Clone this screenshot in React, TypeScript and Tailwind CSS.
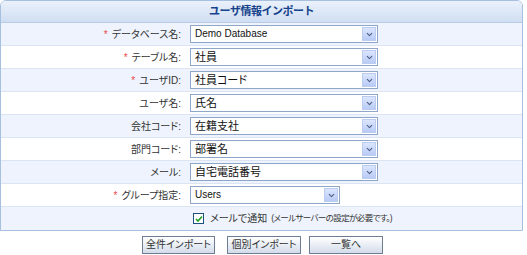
import { ChevronDown } from 'lucide-react';

interface Field {
  label: string;
  value: string;
  required?: boolean;
  short?: boolean;
}

const fields: Field[] = [
  { label: 'データベース名:', value: 'Demo Database', required: true },
  { label: 'テーブル名:', value: '社員', required: true },
  { label: 'ユーザID:', value: '社員コード', required: true },
  { label: 'ユーザ名:', value: '氏名' },
  { label: '会社コード:', value: '在籍支社' },
  { label: '部門コード:', value: '部署名' },
  { label: 'メール:', value: '自宅電話番号' },
  { label: 'グループ指定:', value: 'Users', required: true, short: true },
];

function FakeSelect({ value, short }: { value: string; short?: boolean }) {
  const latin = /^[\x20-\x7e]+$/.test(value);
  return (
    <div
      className={`relative flex h-[18px] items-center border border-[#8ea6c8] bg-white ${
        short ? 'w-[150px]' : 'w-[188px]'
      }`}
    >
      <span className={`pl-[4px] leading-none text-[#111] ${latin ? 'text-[10px]' : 'text-[11px]'}`}>
        {value}
      </span>
      <span className="absolute right-[1px] top-[1px] flex h-[14px] w-[14px] items-center justify-center border border-[#bccbf0] bg-gradient-to-b from-[#dbe5fd] to-[#b9cbf6]">
        <ChevronDown size={9} strokeWidth={3} className="text-[#4d5f86]" />
      </span>
    </div>
  );
}

export default function App() {
  return (
    <div className="h-[255px] w-[527px] bg-white font-['Liberation_Sans','Noto_Sans_CJK_JP',sans-serif] [font-feature-settings:'palt']">
      <div className="w-[523px] overflow-hidden rounded-t-[6px] border border-[#a8c0e0]">
        {/* Header */}
        <div className="flex h-[22px] items-center justify-center border-b border-[#b8cbe6] bg-gradient-to-b from-[#eaf1fb] to-[#d0def2]">
          <h1 className="text-[11px] font-bold tracking-[-0.5px] text-[#15428b] [font-feature-settings:normal]">
            ユーザ情報インポート
          </h1>
        </div>

        {fields.map((f, idx) => (
          <div
            key={f.label}
            className={`flex h-[23px] items-center border-b border-[#dbe4f2] ${
              idx % 2 === 0 ? 'bg-[#eef3fd]' : 'bg-white'
            }`}
          >
            <div className="w-[181px] pr-[1px] text-right text-[10px] text-[#333]">
              {f.required && <span className="mr-[4px] text-[10px] text-[#e84a4a]">*</span>}
              {f.label}
            </div>
            <div className="pl-[8px]">
              <FakeSelect value={f.value} short={f.short} />
            </div>
          </div>
        ))}

        {/* Notify row */}
        <div className="flex h-[23px] items-center bg-[#eef3fd] pl-[192px]">
          <span className="flex h-[11px] w-[11px] items-center justify-center border border-[#1c5180] bg-white">
            <svg width="8" height="8" viewBox="0 0 8 8">
              <path d="M1 4 L3 6 L7 1.5" fill="none" stroke="#21a121" strokeWidth="1.6" />
            </svg>
          </span>
          <span className="ml-[6px] text-[10px] text-[#333]">メールで通知</span>
          <span className="ml-[4px] whitespace-nowrap text-[8.5px] tracking-[-0.6px] text-[#333]">
            (メールサーバーの設定が必要です。)
          </span>
        </div>
      </div>

      {/* Buttons */}
      <div className="flex pl-[142px] pt-[5px]">
        {['全件インポート', '個別インポート', '一覧へ'].map((b, i) => (
          <button
            key={b}
            className={`h-[18px] whitespace-nowrap border border-[#6e7d93] bg-gradient-to-b from-white to-[#d3dcea] p-0 text-[10px] leading-none text-[#333] ${
              i === 0 ? 'mr-[12px] w-[73px]' : i === 1 ? 'mr-[8px] w-[74px]' : 'w-[74px]'
            }`}
          >
            {b}
          </button>
        ))}
      </div>
    </div>
  );
}
